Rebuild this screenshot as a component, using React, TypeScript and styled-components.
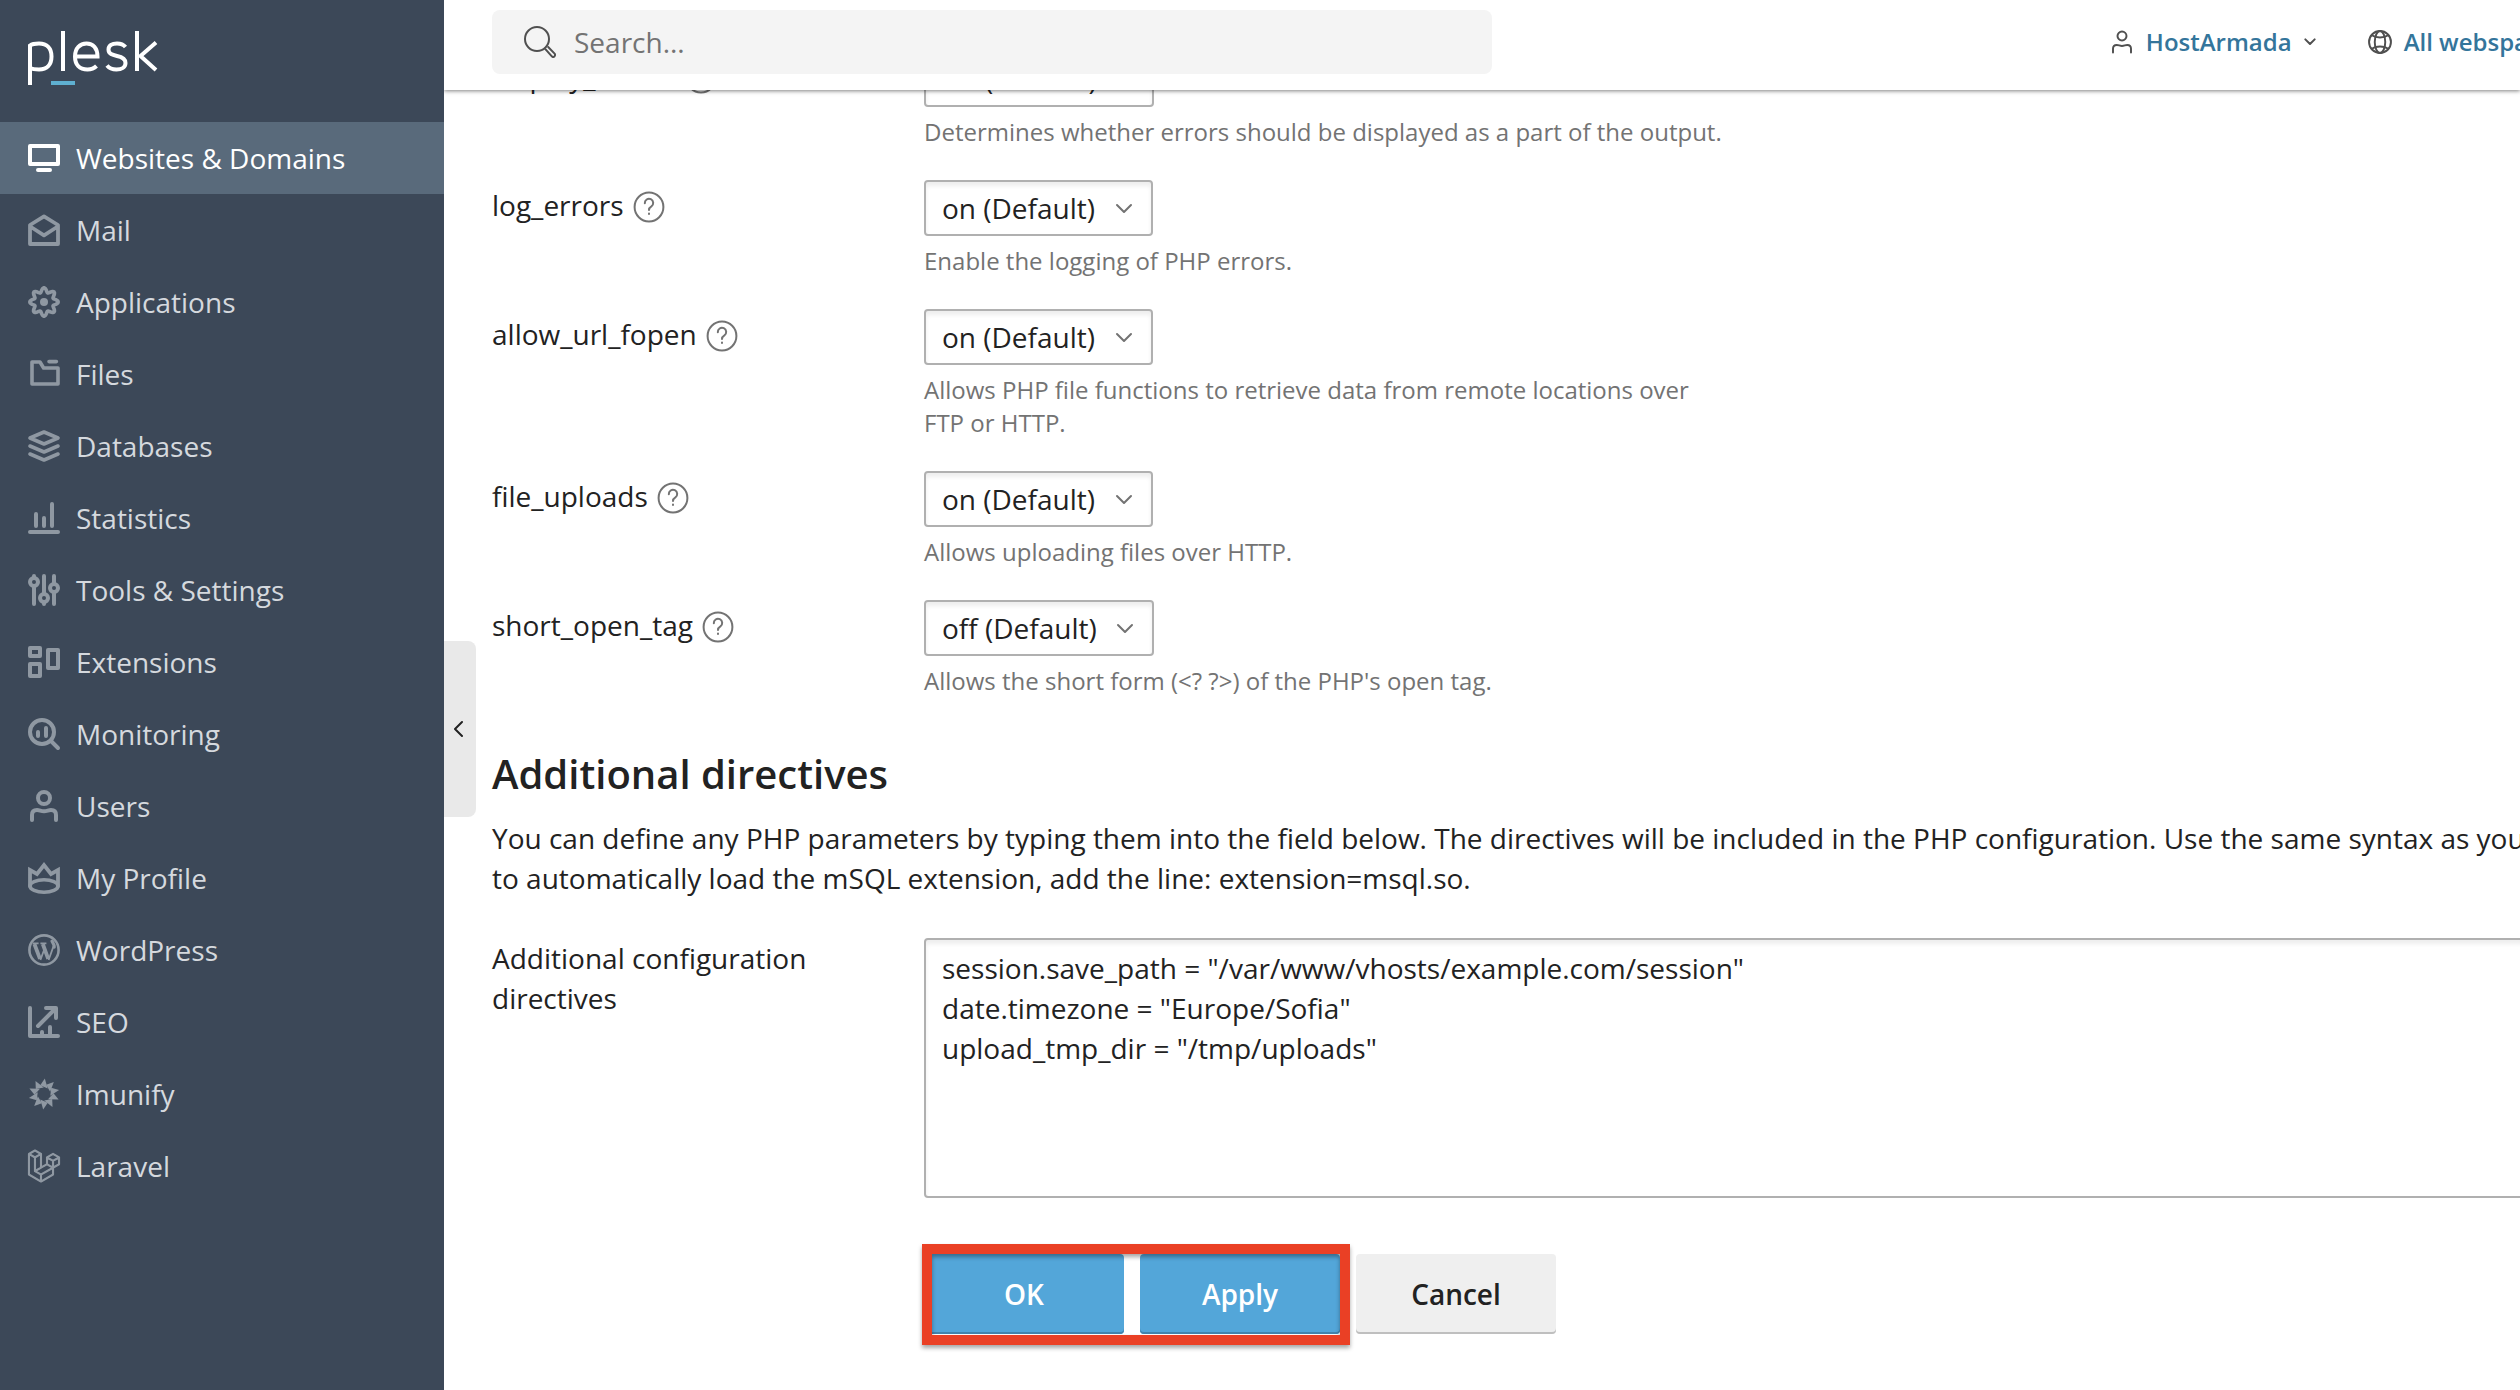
import React from "react";
import styled, { createGlobalStyle } from "styled-components";
import { FaLaravel } from "react-icons/fa";

const Global = createGlobalStyle`
  *, *::before, *::after { box-sizing: border-box; }
  body { margin: 0; background: #fff; color: #222; font: 28px/40px "Open Sans", sans-serif; }
  button, input, select, textarea { font: inherit; color: inherit; }
`;

const Shell = styled.div`
  display: flex;
  min-height: 100vh;
  overflow: hidden;
`;

const Sidebar = styled.aside`
  flex: 0 0 444px;
  background: #3c4858;
`;

const Brand = styled.a`
  display: block;
  height: 122px;
  padding: 28px 28px 0;
  color: #fff;
  svg { display: block; }
`;

const NavLink = styled.a<{ $active?: boolean }>`
  display: flex;
  align-items: center;
  gap: 16px;
  height: 72px;
  padding: 0 28px;
  color: ${p => (p.$active ? "#fff" : "#d5d9de")};
  background: ${p => (p.$active ? "#596a7b" : "transparent")};
  text-decoration: none;
  svg { flex: none; overflow: visible; color: ${p => (p.$active ? "#fff" : "#8f98a2")}; }
`;

const Main = styled.main`
  position: relative;
  flex: 1;
  min-width: 0;
`;

const Header = styled.header`
  position: absolute;
  inset: 0 0 auto;
  z-index: 1;
  display: flex;
  align-items: center;
  height: 90px;
  padding: 0 0 6px 48px;
  background: #fff;
  box-shadow: 0 1px 4px rgba(0, 0, 0, 0.5);
  clip-path: inset(0 0 -12px 0);
`;

const SearchBox = styled.label`
  display: flex;
  align-items: center;
  gap: 18px;
  flex: 0 0 1000px;
  height: 64px;
  padding: 0 32px;
  border-radius: 8px;
  background: #f4f4f4;
  color: #505050;
  input {
    flex: 1;
    border: 0;
    padding: 0;
    outline: 0;
    background: transparent;
    &::placeholder { color: #737373; opacity: 1; }
  }
`;

const HeaderMenus = styled.nav`
  display: flex;
  gap: 52px;
  margin: 0 -8px 0 auto;
`;

const HeaderLink = styled.button`
  display: flex;
  align-items: center;
  gap: 12px;
  padding: 0;
  border: 0;
  background: none;
  color: #34759b;
  font-size: 24px;
  font-weight: 600;
  line-height: 36px;
  white-space: nowrap;
  svg { color: #505050; }
`;

const Collapse = styled.button`
  position: absolute;
  left: 0;
  top: 641px;
  width: 32px;
  height: 176px;
  display: grid;
  place-items: center;
  padding: 0;
  border: 0;
  border-radius: 0 8px 8px 0;
  background: #e9e9e9;
`;

const Form = styled.form`
  padding: 51px 0 0 48px;
`;

const Row = styled.div`
  display: grid;
  grid-template-columns: 392px 1fr;
  column-gap: 40px;
  margin-bottom: 32px;
`;

const RowLabel = styled.div`
  display: flex;
  align-items: flex-start;
  gap: 9px;
  padding-top: 5px;
`;

const HelpButton = styled.button`
  display: grid;
  place-items: center;
  height: 44px;
  padding: 0;
  border: 0;
  background: none;
  color: #737373;
`;

const SelectWrap = styled.div`
  position: relative;
  width: fit-content;
  svg { position: absolute; right: 20px; top: 23px; pointer-events: none; color: #737373; }
`;

const Select = styled.select`
  display: block;
  appearance: none;
  height: 56px;
  padding: 0 55px 0 16px;
  border: 2px solid #b0b0b0;
  border-radius: 4px;
  background: #fff;
  box-shadow: inset 0 4px 4px rgba(0, 0, 0, 0.07);
`;

const Hint = styled.p`
  max-width: 800px;
  margin: 8px 0 0;
  color: #737373;
  font-size: 24px;
  line-height: 33px;
`;

const Title = styled.h2`
  margin: 49px 0 0;
  font-size: 40px;
  line-height: 56px;
  font-weight: 600;
`;

const Intro = styled.p`
  margin: 16px 0 40px;
  white-space: nowrap;
`;

const DirectivesLabel = styled.label`
  max-width: 360px;
`;

const Directives = styled.textarea`
  display: block;
  width: calc(100% + 80px);
  height: 260px;
  padding: 8px 16px;
  border: 2px solid #b0b0b0;
  border-radius: 4px;
  background: #fff;
  box-shadow: inset 0 4px 4px rgba(0, 0, 0, 0.07);
  resize: none;
`;

const Actions = styled.div`
  display: flex;
  gap: 16px;
  margin: 56px 0 0 432px;
`;

const Highlighted = styled.div`
  position: relative;
  display: flex;
  gap: 16px;
  &::after {
    content: "";
    position: absolute;
    inset: -10px -10px -11px -2px;
    border: 10px solid #ea4025;
    filter: drop-shadow(0 3px 2px rgba(0, 0, 0, 0.35));
    pointer-events: none;
  }
`;

const Button = styled.button<{ $primary?: boolean }>`
  width: 200px;
  height: 80px;
  padding: 0;
  border: 0;
  border-radius: 4px;
  font-weight: 600;
  color: ${p => (p.$primary ? "#fff" : "#222")};
  background: ${p => (p.$primary ? "#53a6d9" : "#efefef")};
  box-shadow: inset 0 -2px ${p => (p.$primary ? "#4284ad" : "#bfbfbf")};
`;

const strokes = {
  fill: "none", stroke: "currentColor", strokeLinecap: "round", strokeLinejoin: "round",
} as const;

const Glyph = ({ children, size = 32, w = 2 }: { children: React.ReactNode; size?: number; w?: number }) => (
  <svg width={size} height={size} viewBox="0 0 16 16" {...strokes} strokeWidth={w} aria-hidden="true">{children}</svg>
);

const PersonPaths = () => (
  <>
    <circle cx="8" cy="4" r="3" />
    <path d="M2 15v-2.500c0-1.800 1-2.500 2.500-2.500 1.300 0 2 .6 3.500.6s2.200-.6 3.500-.6c1.500 0 2.500.7 2.500 2.500V15" />
  </>
);

const gearPoints = () => {
  const pts: string[] = [];
  for (let i = 0; i < 96; i++) {
    const a = (i / 96) * Math.PI * 2;
    const r = 6 + 1.1 * Math.cos(8 * a);
    pts.push(`${(8 + r * Math.sin(a)).toFixed(2)},${(8 - r * Math.cos(a)).toFixed(2)}`);
  }
  return pts.join(" ");
};

const icons = {
  sites: <Glyph><path d="M1 2h14v9H1zM5 14h6" /></Glyph>,
  mail: <Glyph><path d="M1 5.500 8 1.200l7 4.300V15H1zM1.500 6.500 8 10.700l6.500-4.200" strokeWidth="1.900" /></Glyph>,
  apps: <Glyph><polygon points={gearPoints()} strokeWidth="1.800" /><circle cx="8" cy="8" r="2" fill="currentColor" stroke="none" /></Glyph>,
  files: <Glyph><path d="M2 2h4l1.800 3H15v8H2zM10.500 1.800h3.700" strokeWidth="1.800" /></Glyph>,
  databases: <Glyph><path d="M1 4 8 1l7 3-7 3zM1 8l7 3 7-3M1 12l7 3 7-3" strokeWidth="1.800" /></Glyph>,
  stats: <Glyph><path d="M1 15h14M4 6v6M8 8v4M12 1v11" /></Glyph>,
  tools: <Glyph><path d="M3 1v1M3 6v9M8 1v9M8 14v1M13 1v4M13 9v6" /><circle cx="3" cy="4" r="2" /><circle cx="8" cy="12" r="2" /><circle cx="13" cy="7" r="2" /></Glyph>,
  extensions: <Glyph><path d="M1 1h5v4H1zM1 9h5v6H1zM10 2h5v9h-5z" /></Glyph>,
  monitoring: <Glyph><circle cx="7" cy="7" r="6" /><path d="M5 7v2M9 5v4M11.500 11.500 15 15" /></Glyph>,
  users: <Glyph><PersonPaths /></Glyph>,
  profile: <Glyph><path d="M1 12V4l3.500 2L8 1.500 11.500 6 15 4v8" strokeLinejoin="miter" strokeWidth="1.900" /><ellipse cx="8" cy="12" rx="7" ry="3.100" strokeWidth="1.800" /></Glyph>,
  seo: <Glyph><path d="M1 1v14h14M5 10l8-8M9 1h5v5M7 13v2M11 10.500V15" /></Glyph>,
  imunify: (
    <Glyph>
      {Array.from({ length: 10 }, (_, i) => (
        <path key={i} d="M8 .2 9.700 5.200 5.900 3.700Z" fill="currentColor" stroke="none" transform={`rotate(${i * 36 + 3} 8 8)`} />
      ))}
    </Glyph>
  ),
  wordpress: (
    <Glyph>
      <circle cx="8" cy="8" r="7.300" strokeWidth="1.300" />
      <path d="M3.200 5 6 12.400M7.400 5l2.700 7.400" strokeLinecap="butt" strokeWidth="1.900" />
      <path d="m6.200 13 2-5.500M10.300 13l2.500-7M2.300 4.700h3M6.200 4.700h3" strokeLinecap="butt" strokeWidth=".9" />
      <path d="M12 3.600c.4 1 1.200 1.500 1.100 3" strokeWidth="1.600" />
    </Glyph>
  ),
  laravel: <FaLaravel size={32} stroke="currentColor" strokeWidth="18" />,
};

const nav: [keyof typeof icons, string][] = [
  ["sites", "Websites & Domains"],
  ["mail", "Mail"],
  ["apps", "Applications"],
  ["files", "Files"],
  ["databases", "Databases"],
  ["stats", "Statistics"],
  ["tools", "Tools & Settings"],
  ["extensions", "Extensions"],
  ["monitoring", "Monitoring"],
  ["users", "Users"],
  ["profile", "My Profile"],
  ["wordpress", "WordPress"],
  ["seo", "SEO"],
  ["imunify", "Imunify"],
  ["laravel", "Laravel"],
];

const settings = [
  { name: "display_errors", value: "off", hint: "Determines whether errors should be displayed as a part of the output." },
  { name: "log_errors", value: "on", hint: "Enable the logging of PHP errors." },
  { name: "allow_url_fopen", value: "on", hint: "Allows PHP file functions to retrieve data from remote locations over FTP or HTTP." },
  { name: "file_uploads", value: "on", hint: "Allows uploading files over HTTP." },
  { name: "short_open_tag", value: "off", hint: "Allows the short form (<? ?>) of the PHP's open tag." },
];

const Chevron = ({ small }: { small?: boolean }) => (
  <svg width={small ? 12 : 18} height={small ? 8 : 12} viewBox="0 0 18 12" {...strokes} strokeWidth={small ? 3 : 2} aria-hidden="true">
    <path d="m2 2 7 7 7-7" />
  </svg>
);

const Logo = () => (
  <svg width="132" height="60" viewBox="0 0 132 60" fill="none" stroke="currentColor" strokeWidth="4" role="img" aria-label="Plesk">
    <path d="M2 57V17.500C4 16 8 15.500 11 15.500 19 15.500 23.500 20 23.500 28.500S19 41.500 11 41.500C7.500 41.500 4 41 2 40" />
    <path d="M35 3v40" />
    <path d="M47 28.500h22.500C69.500 20 65 15.500 58.500 15.500S47 20 47 28.500 51.500 41.500 59.500 41.500c4 0 7-1.500 9-3.500" />
    <path d="M97.500 19c-2-2.500-5-3.500-8.500-3.500-5 0-8.500 2-8.500 6 0 4.500 4 5.500 8.500 6.500 5 1 8.500 3 8.500 7 0 4.500-4 6.500-9 6.500-4.500 0-7.500-1.500-9.500-4" />
    <path d="M109 3v40M128 14.500 112.500 28 128 42" />
    <path d="M23 55h24" stroke="#5fb0d1" />
  </svg>
);

export default function App() {
  return (
    <Shell>
      <Global />
      <Sidebar>
        <Brand href="#"><Logo /></Brand>
        <nav>
          {nav.map(([icon, label]) => (
            <NavLink key={icon} href="#" $active={icon === "sites"}>{icons[icon]}{label}</NavLink>
          ))}
        </nav>
      </Sidebar>
      <Main>
        <Header>
          <SearchBox>
            <Glyph w={1}><circle cx="6.500" cy="6.500" r="6" /><path d="m10.800 11.700 3 3.400a.9.9 0 0 0 1.500-1.300l-3.200-3.300" /></Glyph>
            <input type="search" placeholder="Search..." aria-label="Search" />
          </SearchBox>
          <HeaderMenus>
            <HeaderLink type="button">
              <Glyph size={24} w={1.300}><PersonPaths /></Glyph>HostArmada<Chevron small />
            </HeaderLink>
            <HeaderLink type="button">
              <Glyph size={24} w={1.300}>
                <circle cx="8" cy="8" r="7.300" /><ellipse cx="8" cy="8" rx="3.500" ry="7.300" />
                <path d="M2.500 3.500c3 2 8 2 11 0M2.500 12.500c3-2 8-2 11 0" />
              </Glyph>
              All webspa
            </HeaderLink>
          </HeaderMenus>
        </Header>
        <Collapse type="button" aria-label="Collapse sidebar">
          <svg width="12" height="18" viewBox="0 0 12 18" {...strokes} strokeWidth="2"><path d="M8 2 1 9l7 7" /></svg>
        </Collapse>
        <Form onSubmit={e => e.preventDefault()}>
          {settings.map(s => (
            <Row key={s.name}>
              <RowLabel>
                <label htmlFor={s.name}>{s.name}</label>
                <HelpButton type="button" aria-label={`About ${s.name}`}>
                  <Glyph w={1}>
                    <circle cx="8" cy="8" r="7.200" />
                    <path d="M5.900 6.100a2.100 2.100 0 1 1 3.300 1.600c-.8.500-1.200.9-1.200 1.800M8 11.300v.2" />
                  </Glyph>
                </HelpButton>
              </RowLabel>
              <div>
                <SelectWrap>
                  <Select id={s.name} defaultValue={s.value}>
                    <option value={s.value}>{s.value} (Default)</option>
                  </Select>
                  <Chevron />
                </SelectWrap>
                <Hint>{s.hint}</Hint>
              </div>
            </Row>
          ))}
          <Title>Additional directives</Title>
          <Intro>
            You can define any PHP parameters by typing them into the field below. The directives will be included in the PHP configuration. Use the same syntax as you
            <br />
            to automatically load the mSQL extension, add the line: extension=msql.so.
          </Intro>
          <Row>
            <DirectivesLabel htmlFor="directives">Additional configuration directives</DirectivesLabel>
            <Directives
              id="directives"
              defaultValue={'session.save_path = "/var/www/vhosts/example.com/session"\ndate.timezone = "Europe/Sofia"\nupload_tmp_dir = "/tmp/uploads"'}
            />
          </Row>
          <Actions>
            <Highlighted>
              <Button type="submit" $primary>OK</Button>
              <Button type="button" $primary>Apply</Button>
            </Highlighted>
            <Button type="button">Cancel</Button>
          </Actions>
        </Form>
      </Main>
    </Shell>
  );
}
